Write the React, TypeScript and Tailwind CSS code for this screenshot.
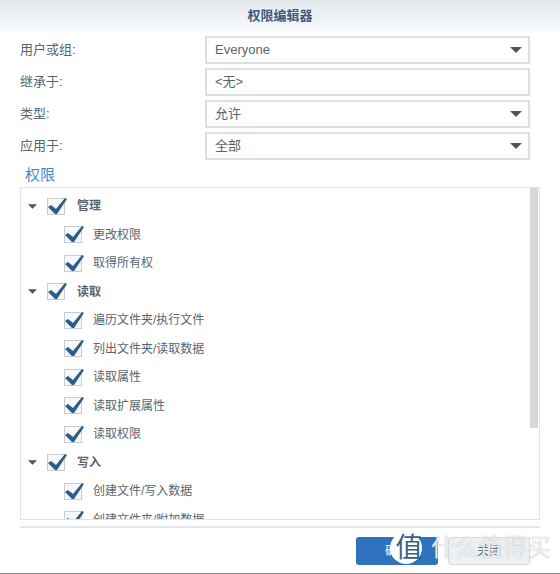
const sans = "font-['Liberation_Sans','Noto_Sans_CJK_SC',sans-serif]";

function Caret({ className = "" }: { className?: string }) {
  return (
    <svg width="14" height="7" viewBox="0 0 14 7" className={className}>
      <path d="M0 0H14L7 7Z" fill="#4a5560" />
    </svg>
  );
}

function Field({ label, value, select = true }: { label: string; value: string; select?: boolean }) {
  return (
    <div className="flex h-7 items-center">
      <div className="w-[205px] pl-5 text-[13px] text-[#5a646e]">{label}</div>
      <div className="flex h-7 w-[325px] items-center justify-between border-2 border-[#dcdfe2] bg-white pl-2 pr-[5px] text-[13px] text-[#5a646e]">
        <span>{value}</span>
        {select && <Caret className="mr-[1px] h-[6px] w-[12px]" />}
      </div>
    </div>
  );
}

function Check() {
  return (
    <span className="relative block h-[17px] w-[18px] shrink-0 border border-[#c6ccd2] bg-[#f6f8fa]">
      <svg width="22" height="20" viewBox="0 0 22 20" className="absolute left-[-1px] top-[-2px]">
        <polygon points="1,10 4,8 9,12 18,1 20,2 10,17 8,17" fill="#2b5c8c" />
      </svg>
    </span>
  );
}

function Group({ label }: { label: string }) {
  return (
    <div className="flex h-[28.5px] items-center pl-[7px]">
      <Caret className="w-[9px]" />
      <span className="ml-[10px]"><Check /></span>
      <span className="ml-[12px] text-[12px] font-bold text-[#5a646e]">{label}</span>
    </div>
  );
}

function Item({ label }: { label: string }) {
  return (
    <div className="flex h-[28.5px] items-center pl-[43px]">
      <Check />
      <span className="ml-[11px] text-[12px] text-[#5a646e]">{label}</span>
    </div>
  );
}

export default function App() {
  return (
    <div className={`relative flex h-[574px] w-[560px] flex-col overflow-hidden bg-white ${sans}`}>
      <div className="flex h-[32px] shrink-0 items-center justify-center bg-gradient-to-b from-[#e3e9f0] to-[#f8f9fb] text-[13px] font-bold text-[#3b5a80]">
        权限编辑器
      </div>
      <div className="mt-[4px] flex flex-col gap-1">
        <Field label="用户或组:" value="Everyone" />
        <Field label="继承于:" value="<无>" select={false} />
        <Field label="类型:" value="允许" />
        <Field label="应用于:" value="全部" />
      </div>
      <div className="ml-[25px] mt-[5px] h-[20px] text-[15px] leading-[20px] text-[#3c8ac8]">权限</div>
      <div className="ml-5 mt-[2px] flex h-[333px] w-[520px] shrink-0 border border-[#e0e3e6]">
        <div className="flex-1 overflow-hidden pt-[4px]">
          <Group label="管理" />
          <Item label="更改权限" />
          <Item label="取得所有权" />
          <Group label="读取" />
          <Item label="遍历文件夹/执行文件" />
          <Item label="列出文件夹/读取数据" />
          <Item label="读取属性" />
          <Item label="读取扩展属性" />
          <Item label="读取权限" />
          <Group label="写入" />
          <Item label="创建文件/写入数据" />
          <Item label="创建文件夹/附加数据" />
        </div>
        <div className="w-[9px] shrink-0 bg-white">
          <div className="h-[240px] w-[8px] bg-[#d6d8db]" />
        </div>
      </div>
      <div className="ml-5 mt-[6px] h-[2px] w-[520px] shrink-0 bg-[#e3e5e8]" />
      <div className="mt-[9px] flex justify-end gap-[10px] pr-[30px]">
        <button className="flex h-7 w-[82px] items-center justify-center rounded-[3px] bg-[#2f72bd] text-[12px] text-white">确定</button>
        <button className="flex h-7 w-[82px] items-center justify-center rounded-[3px] border border-[#d4dae0] bg-[#eef1f4] text-[12px] text-[#505a64]">关闭</button>
      </div>
      <div className="absolute bottom-0 left-0 h-[1px] w-full bg-[#8a8a8a]" />
      <div className="absolute left-[390px] top-[532px] flex h-8 w-8 items-center justify-center rounded-full bg-white pl-[6px] text-[27px] leading-none text-[#2f5f8a]">值</div>
      <div className="absolute left-[431px] top-[534px] text-[24px] leading-7 text-white/80 [text-shadow:0_0_1px_#9aa3ab]">什么值得买</div>
    </div>
  );
}
